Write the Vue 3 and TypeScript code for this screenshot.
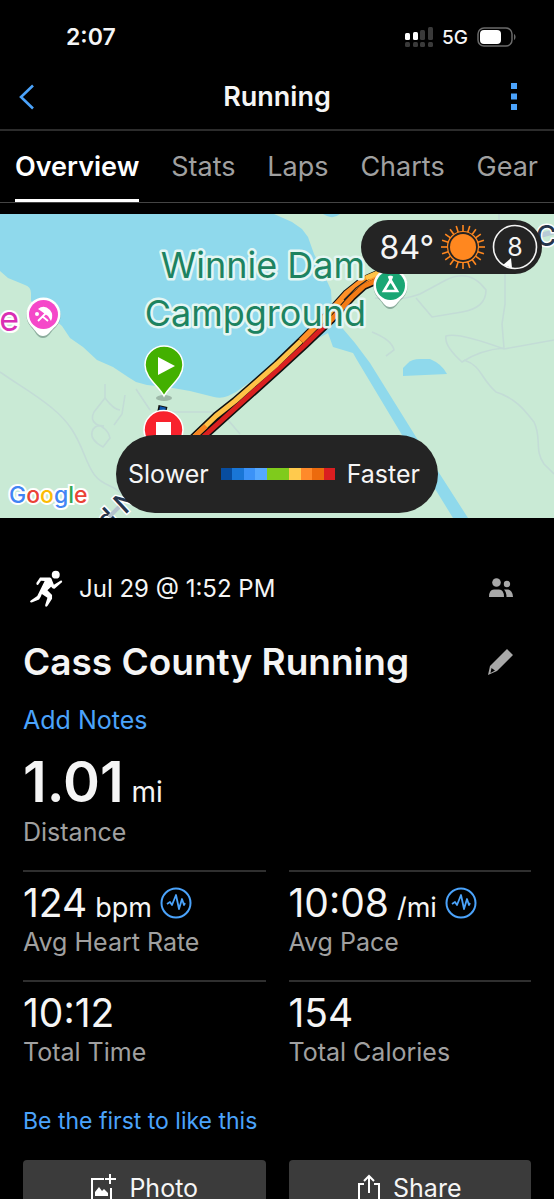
<script setup lang="ts">
import { ref } from 'vue'

interface Stat {
  value: string
  unit?: string
  label: string
  chart?: boolean
}

const tabs: string[] = ['Overview', 'Stats', 'Laps', 'Charts', 'Gear']
const activeTab = ref<string>('Overview')

const stats: Stat[] = [
  { value: '124', unit: 'bpm', label: 'Avg Heart Rate', chart: true },
  { value: '10:08', unit: '/mi', label: 'Avg Pace', chart: true },
  { value: '10:12', label: 'Total Time' },
  { value: '154', label: 'Total Calories' },
]

const sunRays: number[] = Array.from({ length: 20 }, (_, i) => i * 18)
</script>

<template>
  <div class="screen">
    <div class="status">
      <span class="clock">2:07</span>
      <div class="status-right">
        <svg width="28" height="20" viewBox="0 0 28 20" aria-hidden="true">
          <g fill="#fff">
            <rect x="0" y="6" width="5" height="7" rx="1.5" />
            <rect x="8" y="5" width="5" height="8" rx="1.5" />
          </g>
          <g fill="#3a3a3a">
            <rect x="15" y="3" width="5" height="10" rx="1.5" />
            <rect x="23" y="0" width="5" height="13" rx="1.5" />
            <rect x="0" y="15" width="5" height="5" rx="1.5" />
            <rect x="8" y="15" width="5" height="5" rx="1.5" />
            <rect x="15" y="15" width="5" height="5" rx="1.5" />
            <rect x="23" y="15" width="5" height="5" rx="1.5" />
          </g>
        </svg>
        <span class="network">5G</span>
        <svg width="39" height="20" viewBox="0 0 39 20" aria-hidden="true">
          <rect x="1" y="1" width="34" height="18" rx="6" fill="none" stroke="#6a6a6a" stroke-width="1.5" />
          <rect x="3" y="3" width="21" height="14" rx="4" fill="#fff" />
          <path d="M37 7c2 1 2 5 0 6z" fill="#6a6a6a" />
        </svg>
      </div>
    </div>

    <header class="nav">
      <button class="icon-button nav-back" type="button" aria-label="Back">
        <svg width="16" height="26" viewBox="0 0 16 26" fill="none" stroke="#4ba3fb" stroke-width="2.6">
          <path d="M14 1.5 2 13l12 11.500" />
        </svg>
      </button>
      <h1>Running</h1>
      <button class="icon-button nav-more" type="button" aria-label="More options">
        <svg width="6" height="27" viewBox="0 0 6 27" fill="#4ba3fb">
          <path d="M0 0h6v6H0zM0 10.500h6v6H0zM0 21h6v6H0z" />
        </svg>
      </button>
    </header>

    <nav class="tabs" role="tablist">
      <button
        v-for="tab in tabs"
        :key="tab"
        type="button"
        role="tab"
        class="tab"
        :class="{ active: tab === activeTab }"
        :aria-selected="tab === activeTab"
        @click="activeTab = tab"
      >
        {{ tab }}
      </button>
    </nav>

    <section class="map" aria-label="Route map">
      <svg class="map-art" viewBox="0 0 554 304" preserveAspectRatio="xMidYMid slice">
        <rect width="554" height="304" fill="#c9ead5" />
        <path
          fill="#8fd9ec"
          d="M0 0H274L292 8 302 15 308 23 314 40 322 56 331 76 332 95 338 109 355 129 370 149 416 223 468 304H453L402 221 357 146 353 139 343 136 333 133 328 119 300 134 280 148 247 170 236 178 228 182Q221 185 214 183L190 177 167 173 147 171 136 168 128 163 113 153 97 146 83 133 70 124 62 112 54 105 40 95 31 87V79Q31 73 25 71L8 64 0 57Z"
        />
        <path fill="#8fd9ec" d="M403 162V154L408 149Q412 145 420 145H430Q442 150 447 160Z" />
        <path fill="#8fd9ec" d="M323 0H340Q334 5 327 2Z" />
        <g fill="none" stroke="#c3dcd6" stroke-width="1.600">
          <path d="M0 158C20 172 35 180 52 194S76 220 84 240 96 266 110 272 128 288 134 292" />
          <path d="M105 170V184Q114 196 120 196M125 181 122 200 114 211M105 184 94 198Q90 206 96 210 108 214 110 224L103 233Q90 226 92 218T104 212" />
          <path d="M136 175 150 196M166 198H212L228 206 240 220" />
          <path d="M499 0V20L505 60V90L502 110 504 134Q480 136 462 148 444 132 446 122 458 118 504 135L554 126" />
          <path d="M375 84Q398 88 420 80L446 66Q470 54 486 76 486 94 462 98L432 103 416 84" />
          <path d="M372 118Q392 126 394 136L386 142" />
          <path d="M464 146C482 152 480 164 496 178 516 184 526 198 534 208 542 224 534 236 544 250L554 260" />
        </g>
        <path d="M530 24 554 18" stroke="#b8cbd6" stroke-width="5" />
        <text class="road" x="536" y="32">C</text>
        <text class="road" transform="translate(107 318) rotate(-43)">d N</text>
        <path d="m109 303 10-10" stroke="#b5c4ce" stroke-width="4" />

        <g fill="none" stroke-linejoin="round">
          <path d="m161 202 2-10" stroke="#111" stroke-width="9" />
          <path d="m161 202 2-9" stroke="#0b57b0" stroke-width="6" />
          <path d="M202 224 222 206 281 153 306 130 332 105 352 83 364 72 380 65" stroke="#111" stroke-width="8" />
          <path d="M193 224 216 202 235 187 277 150 301 127 328 100 347 79 362 67 380 59" stroke="#111" stroke-width="8" />
          <path d="M202 224 222 206 281 153 306 130 332 105" stroke="#da2020" stroke-width="5" />
          <path d="M193 224 216 202 235 187 277 150 301 127" stroke="#ffc247" stroke-width="5" />
          <path d="m193 224 13-12" stroke="#f78420" stroke-width="5" />
          <path d="M301 127 328 100 347 79 362 67 380 59" stroke="#ff9127" stroke-width="6" />
          <path d="M330 107 332 105 352 83 364 72 380 65" stroke="#f37b16" stroke-width="5" />
          <path d="m344 86 12-12 14-10" stroke="#222" stroke-width="1.200" />
          <path d="m366 64 14-6" stroke="#ffc247" stroke-width="5" />
        </g>

        <g class="place" text-anchor="end">
          <text x="365" y="64">Winnie Dam</text>
          <text x="366" y="112">Campground</text>
        </g>
        <text class="beach" x="19" y="117" text-anchor="end">e</text>

        <g>
          <path d="M43 124C37 124 36 118 31 113A17 17 0 1 1 56 113C50 118 49 124 43 124Z" fill="#5a7a70" opacity=".55" />
          <path d="M43 122C38 122 36 117 31 112A17 17 0 1 1 56 112C50 117 48 122 43 122Z" fill="#fff" />
          <circle cx="43.500" cy="100.500" r="14.500" fill="#f548c9" />
          <path d="M38 95Q44 90 50 96 54 101 51 107L48 102 45 100 41 97Z" fill="#fff" />
          <path d="m47 98-9 9M42 102l6 5" stroke="#fff" stroke-width="1.800" />
          <circle cx="37" cy="100" r="2" fill="#fff" />
        </g>
        <g>
          <path d="M390 95C385 95 383 89 378 84A17 17 0 1 1 403 84C397 89 396 95 390 95Z" fill="#5a7a70" opacity=".55" />
          <path d="M390 93C385 93 383 88 378 83A17 17 0 1 1 403 83C397 88 396 93 390 93Z" fill="#fff" />
          <circle cx="390.500" cy="71.500" r="14.500" fill="#1aa674" />
          <path d="M390.500 66 397 77H384ZM389 62l1.500 4 1.500-4" fill="none" stroke="#fff" stroke-width="2.600" />
        </g>
        <g>
          <ellipse cx="164" cy="184" rx="8" ry="3" fill="#70837a" opacity=".5" />
          <path d="M164 182C159 172 145 164 145 151A19 19 0 0 1 183 151C183 164 169 172 164 182Z" fill="#43b000" stroke="#fff" stroke-width="1.500" />
          <path d="m158 143 17 9-17 9z" fill="#fff" />
          <path d="M164 247C159 237 144 229 144 216A19 19 0 0 1 183 216C183 229 169 237 164 247Z" fill="#f8222d" stroke="#fff" stroke-width="1.500" />
          <path d="M156 208h15v16h-15z" fill="#fff" />
        </g>
        <text class="google" x="9" y="289">
          <tspan fill="#4285f4">G</tspan><tspan fill="#ea4335">o</tspan><tspan fill="#fbbc05">o</tspan><tspan fill="#4285f4">g</tspan><tspan fill="#34a853">l</tspan><tspan fill="#ea4335">e</tspan>
        </text>
      </svg>

      <div class="weather">
        <span>84°</span>
        <svg width="46" height="46" viewBox="-23 -23 46 46" aria-label="Sunny">
          <circle r="13" fill="#ff871f" />
          <path
            v-for="angle in sunRays"
            :key="angle"
            d="M0-15.500V-22"
            :transform="`rotate(${angle})`"
            stroke="#ff871f"
            stroke-width="1.600"
          />
          <circle r="15.500" fill="none" stroke="#ff871f" stroke-width="1.200" />
        </svg>
        <span class="wind">
          8
          <svg class="wind-ring" width="46" height="46" viewBox="0 0 46 46" aria-hidden="true">
            <circle cx="23" cy="23" r="21.500" fill="none" stroke="#f4f4f4" stroke-width="1.600" />
            <path d="m19 34 1 10-9-3z" fill="#fff" />
          </svg>
        </span>
      </div>

      <div class="legend">
        <span>Slower</span>
        <svg class="legend-bar" width="114" height="12" viewBox="0 0 10 1" preserveAspectRatio="none" shape-rendering="crispEdges">
          <rect width="1" height="1" fill="#084d9f" />
          <rect x="1" width="1" height="1" fill="#1976d6" />
          <rect x="2" width="1" height="1" fill="#3b92f7" />
          <rect x="3" width="1" height="1" fill="#55a8ff" />
          <rect x="4" width="2" height="1" fill="#7fcb1c" />
          <rect x="6" width="1" height="1" fill="#ffca4d" />
          <rect x="7" width="1" height="1" fill="#ff8a2a" />
          <rect x="8" width="1" height="1" fill="#ec6a0d" />
          <rect x="9" width="1" height="1" fill="#da1e20" />
        </svg>
        <span>Faster</span>
      </div>
    </section>

    <main class="details">
      <div class="meta">
        <svg width="35" height="37" viewBox="0 0 36 40" fill="#fff" aria-hidden="true">
          <circle cx="28" cy="5" r="4.300" />
          <path d="M11 8 22 8Q24 9 24 11L26 16 33 11.500Q35 11 35 13L27 20Q25 21 23 18L19 22 24 27V31L19 39Q17 41 16.500 38L19 30 13 26Q12 29 10 32L2 35Q-1 35 1 33L8 28 12 20 16 12 12 11.500 9 16Q7 17 7 14Z" />
        </svg>
        <time>Jul 29 @ 1:52 PM</time>
        <button class="icon-button meta-action" type="button" aria-label="Privacy">
          <svg width="24" height="20" viewBox="0 0 24 20" fill="#a8a8a8">
            <circle cx="7.500" cy="4.500" r="4.300" />
            <circle cx="18" cy="6" r="3.200" />
            <path d="M0 19Q0 11.500 5 11.500H10Q15 11.500 15 19ZM15 11.500H19Q23.500 12 24 19H17.500Q17.500 14 15 11.500Z" />
          </svg>
        </button>
      </div>

      <div class="title-row">
        <h2>Cass County Running</h2>
        <button class="icon-button" type="button" aria-label="Edit title">
          <svg width="25" height="26" viewBox="0 0 25 26" fill="#a8a8a8">
            <path fill-rule="evenodd" d="m19 0 6 6L9 22 0 26 2 17ZM3.500 19 2.500 24 7 21.500Z" />
          </svg>
        </button>
      </div>

      <a class="notes" href="#notes">Add Notes</a>

      <div class="distance">
        <p class="distance-value"><strong>1.01</strong> mi</p>
        <p class="label">Distance</p>
      </div>

      <div class="stats">
        <div v-for="stat in stats" :key="stat.label" class="stat">
          <p class="value">
            <span class="number">{{ stat.value }}</span>
            <span v-if="stat.unit" class="unit">{{ stat.unit }}</span>
            <button v-if="stat.chart" class="icon-button chart" type="button" :aria-label="`${stat.label} chart`">
              <svg width="32" height="32" viewBox="0 0 32 32" fill="none" stroke="#4ba3fb">
                <circle cx="16" cy="16" r="14.500" stroke-width="2" />
                <path d="m7 17 3-2 2 3 4-10 3 14 3-10 2 6 1-2" stroke-width="1.800" stroke-linejoin="round" />
              </svg>
            </button>
          </p>
          <p class="label">{{ stat.label }}</p>
        </div>
      </div>

      <a class="likes" href="#likes">Be the first to like this</a>

      <div class="actions">
        <button type="button">
          <svg width="26" height="28" viewBox="0 0 26 28" fill="none" stroke="#fff" stroke-width="2">
            <path d="M14 5H2v21h19V14M20 0v10M15 5h11" />
            <path d="M5 22v-4l4-5 3 4 2-2 4 4v3z" fill="#fff" stroke="none" />
          </svg>
          Photo
        </button>
        <button type="button">
          <svg width="22" height="28" viewBox="0 0 22 28" fill="none" stroke="#fff" stroke-width="2">
            <path d="M6 10H1v16h20V10h-5M11 19V3M6 7l5-5 5 5" />
          </svg>
          Share
        </button>
      </div>
    </main>
  </div>
</template>

<style>
html,
body {
  background: #000;
}
html {
  scrollbar-width: none;
}
</style>

<style scoped>
.screen {
  background: #000;
  color: #f5f5f5;
  font-family: Inter, "Liberation Sans", sans-serif;
  font-size: 25px;
}
h1,
h2,
p {
  margin: 0;
}
button {
  font: inherit;
  color: inherit;
}
a {
  color: #4ba3fb;
  text-decoration: none;
}
svg {
  display: block;
  flex: none;
}
.icon-button {
  display: flex;
  padding: 0;
  border: 0;
  background: none;
}
.status {
  display: flex;
  justify-content: space-between;
  align-items: center;
  height: 64px;
  padding: 10px 38px 0 66px;
  box-sizing: border-box;
}
.clock {
  font-size: 23px;
  font-weight: 600;
}
.status-right {
  display: flex;
  align-items: center;
  gap: 9px;
}
.network {
  font-size: 19px;
  font-weight: 500;
}
.nav {
  display: grid;
  grid-template-columns: 1fr auto 1fr;
  align-items: center;
  height: 67px;
  box-sizing: border-box;
  border-bottom: 2px solid #2c2c2c;
}
.nav h1 {
  font-size: 27px;
  line-height: 32px;
  font-weight: 600;
}
.nav-back {
  justify-self: start;
  margin-left: 19px;
}
.nav-more {
  justify-self: end;
  margin-right: 37px;
}
.tabs {
  display: flex;
  justify-content: space-between;
  height: 72px;
  padding: 0 16px 0 15px;
  box-sizing: border-box;
  border-bottom: 1px solid #444;
}
.tab {
  padding: 0;
  border: 0;
  background: none;
  color: #a0a0a0;
  font-size: 27px;
}
.tab.active {
  color: #fff;
  font-weight: 600;
  box-shadow: inset 0 -3px #fff;
}
.map {
  position: relative;
  margin-top: 11px;
}
.map-art {
  width: 100%;
}
.place {
  fill: #1d8360;
  font-size: 36px;
  stroke: #e4f6f3;
  stroke-width: 5px;
  paint-order: stroke;
  stroke-linejoin: round;
}
.beach {
  fill: #d92fb4;
  font-size: 34px;
  stroke: #fff;
  stroke-width: 4px;
  paint-order: stroke;
}
.road {
  fill: #26364d;
  font-size: 28px;
  font-weight: 500;
  stroke: #fff;
  stroke-width: 3px;
  paint-order: stroke;
}
.google {
  font-size: 23px;
  font-weight: 500;
  stroke: #fff;
  stroke-width: 4px;
  paint-order: stroke;
}
.weather {
  position: absolute;
  top: 6px;
  right: 12px;
  display: flex;
  align-items: center;
  gap: 6px;
  height: 54px;
  padding: 0 4px 0 19px;
  border-radius: 27px;
  background: #242424;
  font-size: 32px;
}
.wind {
  position: relative;
  width: 46px;
  line-height: 46px;
  text-align: center;
  font-size: 25px;
}
.wind-ring {
  position: absolute;
  inset: 0;
}
.legend {
  position: absolute;
  bottom: 5px;
  left: 50%;
  transform: translateX(-50%);
  display: flex;
  align-items: center;
  gap: 12px;
  width: 322px;
  height: 78px;
  padding-left: 12px;
  box-sizing: border-box;
  border-radius: 39px;
  background: #242424;
}
.details {
  padding: 0 23px;
}
.meta {
  display: flex;
  align-items: center;
  gap: 15px;
  height: 40px;
  margin-top: 50px;
  padding: 0 18px 0 6px;
  font-size: 24px;
}
.meta-action {
  margin-left: auto;
}
.title-row {
  display: flex;
  align-items: center;
  justify-content: space-between;
  margin-top: 30px;
  padding-right: 18px;
}
h2 {
  font-size: 37px;
  line-height: 48px;
  font-weight: 600;
}
.notes {
  display: block;
  margin-top: 18px;
  line-height: 32px;
}
.distance {
  margin-top: 12px;
}
.distance-value {
  height: 68px;
  font-size: 28px;
  line-height: 68px;
}
.distance-value strong {
  font-size: 56px;
  font-weight: 600;
}
.label {
  color: #a0a0a0;
  line-height: 32px;
}
.stats {
  display: grid;
  grid-template-columns: 1fr 1fr;
  column-gap: 23px;
  margin-top: 22px;
}
.stat {
  height: 110px;
  box-sizing: border-box;
  border-top: 2px solid #2f2f2f;
  padding-top: 8px;
}
.value {
  display: flex;
  align-items: baseline;
  gap: 8px;
  height: 46px;
  line-height: 46px;
}
.number {
  font-size: 39px;
}
.unit {
  font-size: 27px;
}
.chart {
  align-self: center;
}
.likes {
  display: block;
  margin-top: 15px;
  font-size: 23px;
  line-height: 32px;
}
.actions {
  display: grid;
  grid-template-columns: 1fr 1fr;
  gap: 23px;
  margin-top: 23px;
}
.actions button {
  display: flex;
  align-items: center;
  justify-content: center;
  gap: 13px;
  height: 56px;
  padding: 0;
  border: 0;
  border-radius: 4px;
  background: #3b3b3b;
}
</style>
